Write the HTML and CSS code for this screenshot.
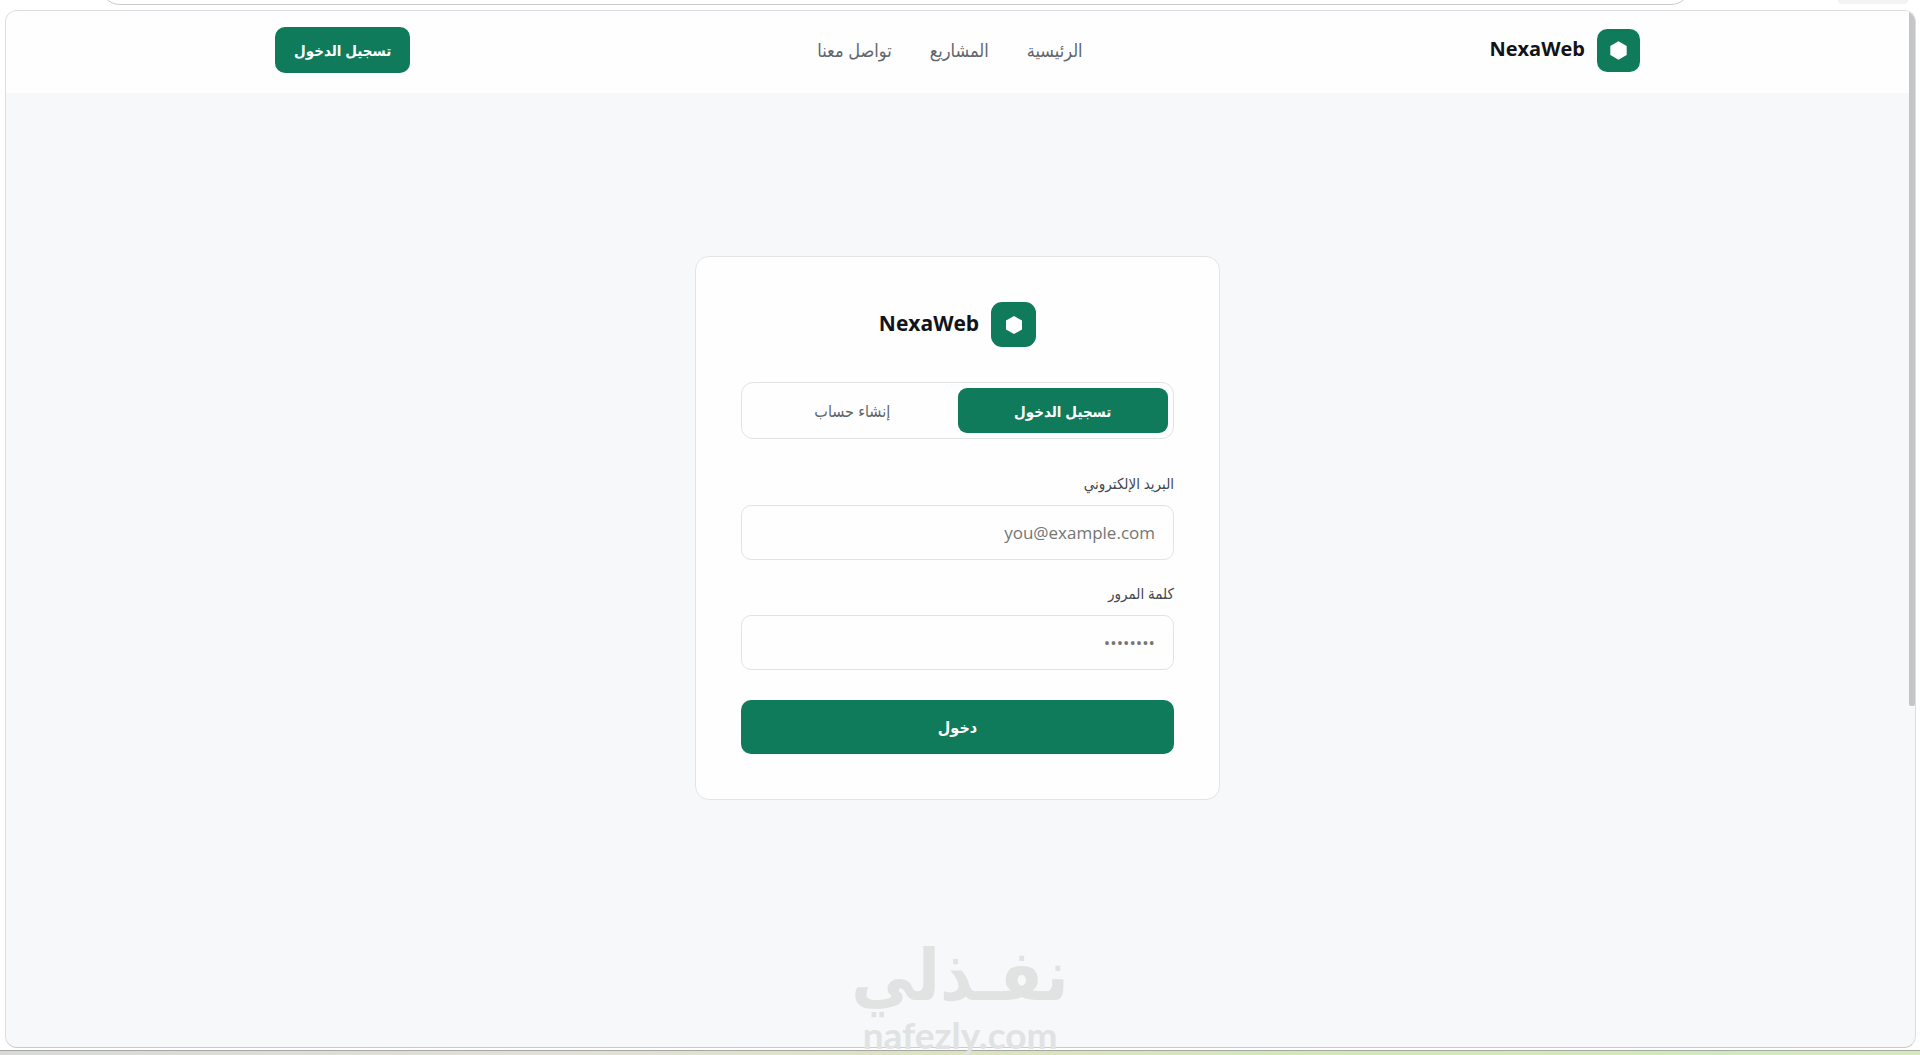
FILE: index.html
```html
<!DOCTYPE html>
<html lang="ar" dir="rtl">
<head>
  <meta charset="UTF-8" />
  <meta name="viewport" content="width=device-width, initial-scale=1" />
  <title>NexaWeb</title>
  <link rel="stylesheet" href="styles.css">
</head>
<body>
  <!-- Browser toolbar edge -->
  <div class="toolbar">
    <div class="address-bar"></div>
    <div class="toolbar-chip"></div>
  </div>

  <div class="window">
    <header class="header">
      <div class="header-inner">
        <a class="brand" href="#">
          <svg class="brand-icon" viewBox="0 0 42 42" aria-hidden="true">
            <rect width="42" height="42" rx="10" fill="#0f7b5a"/>
            <path d="M21 12l8 4.500v9l-8 4.500-8-4.500v-9z" fill="#fff"/>
          </svg>
          <span>NexaWeb</span>
        </a>
        <nav class="nav">
          <a href="#">الرئيسية</a>
          <a href="#">المشاريع</a>
          <a href="#">تواصل معنا</a>
        </nav>
        <button class="header-btn" type="button">تسجيل الدخول</button>
      </div>
    </header>

    <main class="main">
      <div class="card">
        <div class="brand card-brand">
          <svg class="brand-icon" viewBox="0 0 45 45" aria-hidden="true">
            <rect width="45" height="45" rx="11" fill="#0f7b5a"/>
            <path d="M23 14l8 4.500v9l-8 4.500-8-4.500v-9z" fill="#fff"/>
          </svg>
          <span>NexaWeb</span>
        </div>

        <div class="tabs">
          <button class="tab active" type="button">تسجيل الدخول</button>
          <button class="tab" type="button">إنشاء حساب</button>
        </div>

        <form class="form">
          <label for="email">البريد الإلكتروني</label>
          <input id="email" type="email" placeholder="you@example.com">
          <label for="password">كلمة المرور</label>
          <input id="password" type="password" placeholder="••••••••">
          <button class="submit" type="submit">دخول</button>
        </form>
      </div>
    </main>

    <div class="scroll-thumb"></div>
  </div>

  <div class="desktop-edge"></div>

  <!-- Watermark -->
  <div class="watermark">
    <span class="watermark-ar">نفـذلي</span>
    <span class="watermark-en">nafezly.com</span>
  </div>
</body>
</html>
```
FILE: styles.css
```css
* {
  box-sizing: border-box;
}

body {
  margin: 0;
  min-height: 100vh;
  display: flex;
  flex-direction: column;
  position: relative;
  overflow: hidden;
  background-color: #fff;
  color: #111418;
  font-family: 'Open Sans', 'DejaVu Sans Condensed', 'DejaVu Sans', sans-serif;
}

button,
input {
  font-family: inherit;
}

button {
  cursor: pointer;
}

a {
  color: inherit;
  text-decoration: none;
}

/* Browser frame */
.toolbar {
  height: 10px;
  display: flex;
  align-items: flex-start;
  justify-content: space-between;
  direction: ltr;
  padding: 0 12px 0 100px;
  overflow: hidden;
}

.address-bar {
  width: 88%;
  height: 40px;
  margin-top: -35px;
  border: 1px solid #c9cbce;
  border-radius: 20px;
}

.toolbar-chip {
  width: 70px;
  height: 4px;
  background-color: #f3f3f4;
  border-radius: 0 0 8px 8px;
}

.window {
  flex: 1;
  display: flex;
  flex-direction: column;
  position: relative;
  margin: 0 4px 2px 5px;
  padding-right: 6px;
  border: 1px solid #dcdddf;
  border-bottom-color: #c9cbce;
  border-radius: 12px;
  background-color: #f6f8fa;
  overflow: hidden;
}

.scroll-thumb {
  position: absolute;
  top: 1px;
  right: 0;
  width: 6px;
  height: 67%;
  background-color: #c4c5c7;
  border-radius: 0 6px 2px 2px;
}

.desktop-edge {
  height: 5px;
  border-top: 1px solid #a5a7a3;
  background: linear-gradient(90deg, #d9d9d7, #e2e0d6 30%, #dde3bd 50%, #d2e8b6 70%, #d3eabb);
}

/* Header */
.header {
  background-color: #fefefe;
}

.header-inner {
  max-width: 1365px;
  height: 82px;
  padding-bottom: 4px;
  margin: 0 auto;
  display: flex;
  align-items: center;
  justify-content: space-between;
}

.brand {
  display: flex;
  align-items: center;
  gap: 12px;
  font-size: 20px;
  line-height: 24px;
  font-weight: 700;
}

.brand span {
  padding-bottom: 3px;
}

.brand-icon {
  width: 43px;
  height: 43px;
}

.nav {
  display: flex;
  gap: 38px;
  font-size: 18px;
  color: #62666c;
}

.header-btn {
  height: 46px;
  padding: 0 19px;
  border: none;
  border-radius: 10px;
  background-color: #0f7b5a;
  color: #fff;
  font-size: 15px;
  font-weight: 600;
}

/* Login card */
.main {
  flex: 1;
  padding: 163px 20px;
}

.card {
  max-width: 525px;
  margin: 0 auto;
  padding: 45px;
  border: 1px solid #e2e5e8;
  border-radius: 14px;
  background-color: #fefefe;
}

.card-brand {
  justify-content: center;
  margin-bottom: 35px;
  font-size: 21px;
}

.card-brand .brand-icon {
  width: 45px;
  height: 45px;
}

.tabs {
  display: flex;
  padding: 5px;
  margin-bottom: 32px;
  border: 1px solid #e2e3e5;
  border-radius: 12px;
}

.tab {
  flex: 1;
  height: 45px;
  border: none;
  border-radius: 9px;
  background: none;
  color: #62666c;
  font-size: 16px;
}

.tab.active {
  background-color: #0f7b5a;
  color: #fff;
  font-size: 15px;
  font-weight: 600;
}

.form {
  display: flex;
  flex-direction: column;
}

.form label {
  margin-bottom: 10px;
  font-size: 15px;
  line-height: 24px;
  color: #43474d;
}

.form input {
  height: 55px;
  margin-bottom: 21px;
  padding: 0 18px;
  border: 1px solid #e2e3e5;
  border-radius: 10px;
  background-color: #fefefe;
  font-size: 17px;
  text-align: right;
}

.form input::placeholder {
  color: #757575;
}

.submit {
  height: 54px;
  margin-top: 9px;
  border: none;
  border-radius: 10px;
  background-color: #0f7b5a;
  color: #fff;
  font-size: 16px;
  font-weight: 600;
}

/* Watermark over the page */
.watermark {
  position: absolute;
  bottom: 0;
  left: 50%;
  transform: translateX(-50%);
  display: flex;
  flex-direction: column;
  align-items: center;
  color: #e1e2e2;
  font-weight: 700;
  pointer-events: none;
}

.watermark-ar {
  font-family: 'DejaVu Sans Condensed', 'DejaVu Sans', sans-serif;
  font-size: 71px;
  line-height: 78px;
}

.watermark-en {
  font-family: Lato, sans-serif;
  font-size: 37px;
  line-height: 40px;
}
```
